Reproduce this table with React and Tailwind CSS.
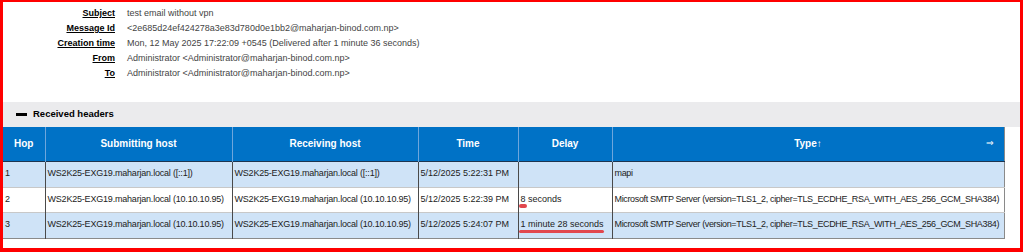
import React from 'react';

const fields = [
  ['Subject', 'test email without vpn'],
  ['Message Id', '<2e685d24ef424278a3e83d780d0e1bb2@maharjan-binod.com.np>'],
  ['Creation time', 'Mon, 12 May 2025 17:22:09 +0545 (Delivered after 1 minute 36 seconds)'],
  ['From', 'Administrator <Administrator@maharjan-binod.com.np>'],
  ['To', 'Administrator <Administrator@maharjan-binod.com.np>'],
];

const hops = [
  {
    hop: '1',
    from: 'WS2K25-EXG19.maharjan.local ([::1])',
    to: 'WS2K25-EXG19.maharjan.local ([::1])',
    time: '5/12/2025 5:22:31 PM',
    delay: '',
    type: 'mapi',
  },
  {
    hop: '2',
    from: 'WS2K25-EXG19.maharjan.local (10.10.10.95)',
    to: 'WS2K25-EXG19.maharjan.local (10.10.10.95)',
    time: '5/12/2025 5:22:39 PM',
    delay: '8 seconds',
    type: 'Microsoft SMTP Server (version=TLS1_2, cipher=TLS_ECDHE_RSA_WITH_AES_256_GCM_SHA384)',
  },
  {
    hop: '3',
    from: 'WS2K25-EXG19.maharjan.local (10.10.10.95)',
    to: 'WS2K25-EXG19.maharjan.local (10.10.10.95)',
    time: '5/12/2025 5:24:07 PM',
    delay: '1 minute 28 seconds',
    type: 'Microsoft SMTP Server (version=TLS1_2, cipher=TLS_ECDHE_RSA_WITH_AES_256_GCM_SHA384)',
  },
];

const headCell = 'border-l border-[#6ea6dc] first:border-l-0 text-center font-bold text-white text-[10px]';
const bodyCell = 'border-l border-[#4a4a4a] first:border-l-0 pl-[2px] whitespace-nowrap overflow-hidden text-[9px] text-[#222]';

export default function App() {
  return (
    <div className="w-[1024px] h-[252px] bg-white pr-[1px]" style={{ fontFamily: '"Liberation Sans", Arial, sans-serif' }}>
      <div className="h-[252px] border-t-2 border-l-[3px] border-r-[3px] border-b-4 border-[#ff0000] flex flex-col">
        {/* summary */}
        <div className="pt-[4px] h-[100px]">
          {fields.map(([label, value]) => (
            <div key={label} className="flex h-[15px] items-center text-[9px]">
              <div className="w-[112px] text-right font-bold text-black underline underline-offset-[1px]">{label}</div>
              <div className="ml-[12px] text-[#444]">{value}</div>
            </div>
          ))}
        </div>

        {/* received headers */}
        <div className="bg-[#ebebed] h-[25px] flex items-center pl-[13px] gap-[6px]">
          <span className="w-[11px] h-[3px] bg-black"></span>
          <span className="font-bold text-[9.5px] text-black">Received headers</span>
        </div>

        <div className="relative w-[1001px]">
          <table className="w-[1001px] table-fixed border-collapse border-r border-b border-[#8a8a8a]">
            <colgroup>
              <col className="w-[42px]" />
              <col className="w-[187px]" />
              <col className="w-[186px]" />
              <col className="w-[100px]" />
              <col className="w-[94px]" />
              <col className="w-[392px]" />
            </colgroup>
            <thead>
              <tr className="h-[34px] bg-[#0072c6] border-b border-[#1d3550]">
                <th className={headCell}>Hop</th>
                <th className={headCell}>Submitting host</th>
                <th className={headCell}>Receiving host</th>
                <th className={headCell}>Time</th>
                <th className={headCell}>Delay</th>
                <th className={headCell + ' relative'}>
                  Type<span className="font-normal">↑</span>
                  <span
                    className="absolute right-[10px] top-1/2 -translate-y-1/2 text-[9px] font-normal"
                    style={{ fontFamily: '"DejaVu Sans", sans-serif' }}
                  >
                    ⇒
                  </span>
                </th>
              </tr>
            </thead>
            <tbody>
              {hops.map((h, i) => (
                <tr
                  key={h.hop}
                  className={(i % 2 === 0 ? 'bg-[#cfe3f7]' : 'bg-white') + ' border-t border-[#c8c8c8] ' + (i === 1 ? 'h-[25px]' : 'h-[26px]')}
                >
                  <td className={bodyCell}>{h.hop}</td>
                  <td className={bodyCell + ' tracking-[-0.2px]'}>{h.from}</td>
                  <td className={bodyCell + ' tracking-[-0.2px]'}>{h.to}</td>
                  <td className={bodyCell}>{h.time}</td>
                  <td className={bodyCell}>{h.delay}</td>
                  <td className={bodyCell + ' tracking-[-0.35px]'}>{h.type}</td>
                </tr>
              ))}
            </tbody>
          </table>
          {/* annotation marks */}
          <span className="absolute left-[516px] top-[77px] w-[8px] h-[4px] rounded-full bg-[#e2474d]"></span>
          <span className="absolute left-[516px] top-[103px] w-[85px] h-[3px] rounded-full bg-[#e2474d]"></span>
        </div>
      </div>
    </div>
  );
}
